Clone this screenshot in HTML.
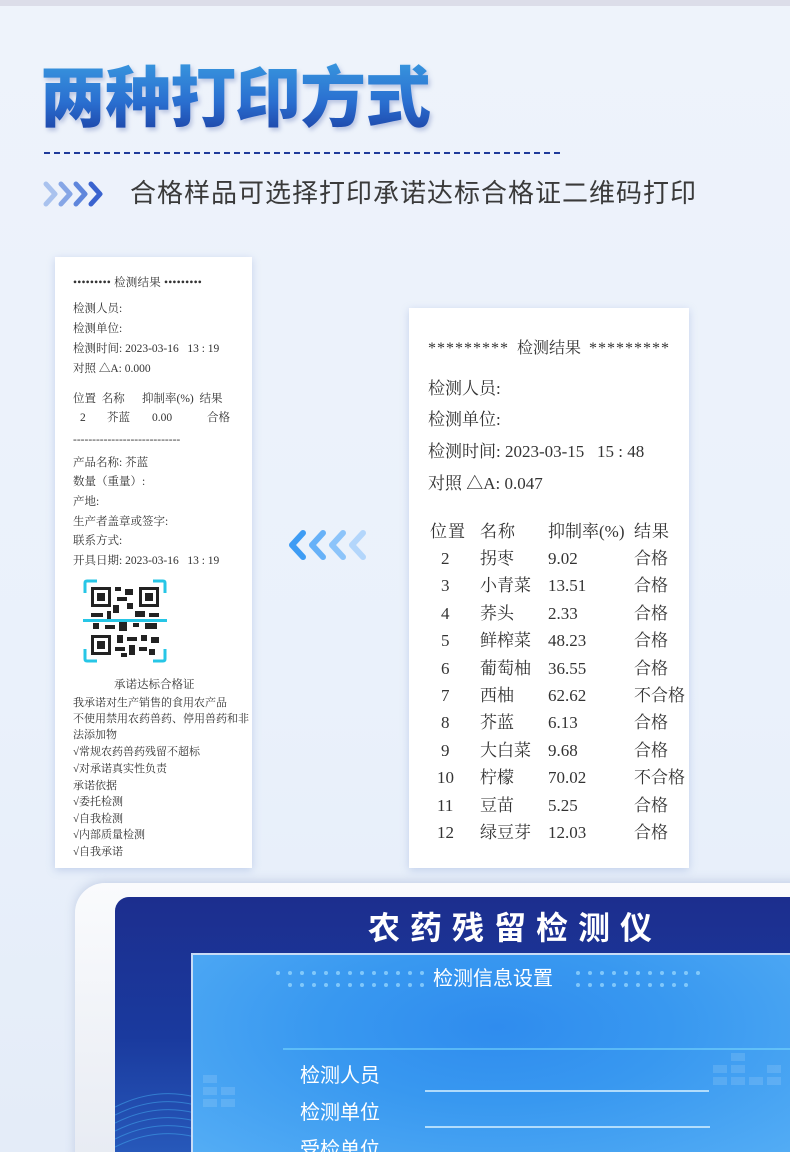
<!DOCTYPE html>
<html><head><meta charset="utf-8">
<style>
*{margin:0;padding:0;box-sizing:border-box}
html,body{width:790px;height:1152px;overflow:hidden}
body{position:relative;background:linear-gradient(180deg,#eef3fb 0%,#eaf1fb 60%,#e4ecf8 100%);font-family:"Liberation Sans","Noto Sans CJK SC",sans-serif}
.a{position:absolute;white-space:nowrap}
.topbar{left:0;top:0;width:790px;height:6px;background:#dcdde9}
.title{left:40px;top:56px;font-size:66px;font-weight:900;letter-spacing:-1px;line-height:84px;
 background:linear-gradient(180deg,#3a9be0 0%,#2a6fd0 55%,#1a3a9e 100%);-webkit-background-clip:text;background-clip:text;color:transparent;filter:drop-shadow(2px 3px 2px rgba(30,60,150,.25))}
.dash{left:44px;top:152px;width:516px;border-top:2px dashed #1f3a9a}
.sub{left:130px;top:176px;font-size:26px;letter-spacing:1px;color:#3a3a3a;line-height:34px}
.rc{background:#fff;box-shadow:0 2px 8px rgba(120,150,210,.35);font-family:"Liberation Serif","Noto Serif CJK SC",serif;color:#333}
.s{font-size:11.5px;line-height:13px}
.t{font-size:11px;line-height:13px}
.b{font-size:17px;line-height:20px}
</style></head><body>
<div class="a topbar"></div>
<div class="a title">两种打印方式</div>
<div class="a dash"></div>
<svg class="a" style="left:43px;top:180px" width="66" height="28" viewBox="0 0 66 28">
<g fill="none" stroke-width="5" stroke-linecap="round" stroke-linejoin="round">
<path d="M3 4 L12 14 L3 24" stroke="#a9c2ee"/>
<path d="M18 4 L27 14 L18 24" stroke="#86a6e6"/>
<path d="M33 4 L42 14 L33 24" stroke="#5f86dc"/>
<path d="M48 4 L57 14 L48 24" stroke="#3a63cf"/>
</g></svg>
<div class="a sub">合格样品可选择打印承诺达标合格证二维码打印</div>

<!-- left receipt -->
<div class="a rc" style="left:55px;top:257px;width:197px;height:611px">
 <div class="a s" style="left:18px;top:20px;letter-spacing:.2px">••••••••• 检测结果 •••••••••</div>
 <div class="a s" style="left:18px;top:46px">检测人员:</div>
 <div class="a s" style="left:18px;top:66px">检测单位:</div>
 <div class="a s" style="left:18px;top:86px">检测时间: 2023-03-16 &nbsp;&nbsp;13 : 19</div>
 <div class="a s" style="left:18px;top:106px">对照 △A: 0.000</div>
 <div class="a s" style="left:18px;top:136px">位置 &nbsp;名称 &nbsp;&nbsp;&nbsp;&nbsp;&nbsp;抑制率(%) &nbsp;结果</div>
 <div class="a s" style="left:25px;top:155px">2</div>
 <div class="a s" style="left:52px;top:155px">芥蓝</div>
 <div class="a s" style="left:97px;top:155px">0.00</div>
 <div class="a s" style="left:152px;top:155px">合格</div>
 <div class="a s" style="left:18px;top:177px">----------------------------</div>
 <div class="a s" style="left:18px;top:200px">产品名称: 芥蓝</div>
 <div class="a s" style="left:18px;top:219px">数量（重量）:</div>
 <div class="a s" style="left:18px;top:239px">产地:</div>
 <div class="a s" style="left:18px;top:259px">生产者盖章或签字:</div>
 <div class="a s" style="left:18px;top:278px">联系方式:</div>
 <div class="a s" style="left:18px;top:298px">开具日期: 2023-03-16 &nbsp;&nbsp;13 : 19</div>
 <svg class="a" style="left:28px;top:322px" width="84" height="84" viewBox="0 0 84 84">
  <g fill="none" stroke="#27c6e6" stroke-width="3">
   <path d="M2 14 V4 Q2 2 4 2 H14"/><path d="M70 2 H80 Q82 2 82 4 V14"/>
   <path d="M2 70 V80 Q2 82 4 82 H14"/><path d="M82 70 V80 Q82 82 80 82 H70"/>
  </g>
  <g fill="#222">
   <rect x="8" y="8" width="20" height="20"/><rect x="56" y="8" width="20" height="20"/><rect x="8" y="56" width="20" height="20"/>
  </g>
  <g fill="#fff"><rect x="11" y="11" width="14" height="14"/><rect x="59" y="11" width="14" height="14"/><rect x="11" y="59" width="14" height="14"/></g>
  <g fill="#222"><rect x="14" y="14" width="8" height="8"/><rect x="62" y="14" width="8" height="8"/><rect x="14" y="62" width="8" height="8"/>
   <rect x="32" y="8" width="6" height="4"/><rect x="42" y="10" width="8" height="6"/><rect x="34" y="18" width="10" height="4"/><rect x="30" y="26" width="6" height="8"/><rect x="44" y="24" width="6" height="6"/>
   <rect x="8" y="34" width="12" height="4"/><rect x="24" y="32" width="4" height="8"/><rect x="52" y="32" width="10" height="6"/><rect x="66" y="34" width="10" height="4"/>
   <rect x="10" y="44" width="6" height="6"/><rect x="22" y="46" width="10" height="4"/><rect x="36" y="42" width="8" height="10"/><rect x="50" y="44" width="6" height="4"/><rect x="62" y="44" width="12" height="6"/>
   <rect x="34" y="56" width="6" height="8"/><rect x="44" y="58" width="10" height="4"/><rect x="58" y="56" width="6" height="6"/><rect x="68" y="58" width="8" height="6"/>
   <rect x="32" y="68" width="10" height="4"/><rect x="46" y="66" width="6" height="10"/><rect x="56" y="68" width="8" height="4"/><rect x="66" y="70" width="6" height="6"/><rect x="38" y="74" width="6" height="4"/></g>
  <rect x="0" y="40" width="84" height="3" fill="#27c6e6"/>
 </svg>
 <div class="a s" style="left:59px;top:422px">承诺达标合格证</div>
 <div class="a t" style="left:18px;top:440px">我承诺对生产销售的食用农产品</div>
 <div class="a t" style="left:18px;top:456px">不使用禁用农药兽药、停用兽药和非</div>
 <div class="a t" style="left:18px;top:472px">法添加物</div>
 <div class="a t" style="left:18px;top:489px">√常规农药兽药残留不超标</div>
 <div class="a t" style="left:18px;top:506px">√对承诺真实性负责</div>
 <div class="a t" style="left:18px;top:523px">承诺依据</div>
 <div class="a t" style="left:18px;top:539px">√委托检测</div>
 <div class="a t" style="left:18px;top:556px">√自我检测</div>
 <div class="a t" style="left:18px;top:572px">√内部质量检测</div>
 <div class="a t" style="left:18px;top:589px">√自我承诺</div>
</div>

<svg class="a" style="left:288px;top:529px" width="80" height="32" viewBox="0 0 80 32">
<g fill="none" stroke-width="6" stroke-linecap="round" stroke-linejoin="round">
<path d="M75 4 L64 16 L75 28" stroke="#b3d6fb"/>
<path d="M55 4 L44 16 L55 28" stroke="#8cc4fa"/>
<path d="M35 4 L24 16 L35 28" stroke="#66b1f8"/>
<path d="M15 4 L4 16 L15 28" stroke="#3d9cf4"/>
</g></svg>

<!-- right receipt -->
<div class="a rc" style="left:409px;top:308px;width:280px;height:560px">
 <div class="a b" style="left:19px;top:31px;font-size:16px"><span style="letter-spacing:1px">*********</span> &nbsp;检测结果 &nbsp;<span style="letter-spacing:1px">*********</span></div>
 <div class="a b" style="left:19px;top:71px">检测人员:</div>
 <div class="a b" style="left:19px;top:102px">检测单位:</div>
 <div class="a b" style="left:19px;top:134px">检测时间: 2023-03-15 &nbsp;&nbsp;15 : 48</div>
 <div class="a b" style="left:19px;top:166px">对照 △A: 0.047</div>
 <div class="a b" style="left:21px;top:214px;letter-spacing:1px">位置</div><div class="a b" style="left:71px;top:214px;letter-spacing:1px">名称</div><div class="a b" style="left:139px;top:214px">抑制率(%)</div><div class="a b" style="left:225px;top:214px;letter-spacing:1px">结果</div>
</div>
<div id="rows"></div>
<script>
var d=[["2","拐枣","9.02","合格"],["3","小青菜","13.51","合格"],["4","荞头","2.33","合格"],["5","鲜榨菜","48.23","合格"],["6","葡萄柚","36.55","合格"],["7","西柚","62.62","不合格"],["8","芥蓝","6.13","合格"],["9","大白菜","9.68","合格"],["10","柠檬","70.02","不合格"],["11","豆苗","5.25","合格"],["12","绿豆芽","12.03","合格"]];
var h="";d.forEach(function(r,i){var y=549+i*27.4;var nx=r[0].length>1?437:441;
h+='<div class="a rc b" style="background:none;box-shadow:none;left:'+nx+'px;top:'+y+'px">'+r[0]+'</div>';
h+='<div class="a rc b" style="background:none;box-shadow:none;left:480px;top:'+y+'px">'+r[1]+'</div>';
h+='<div class="a rc b" style="background:none;box-shadow:none;left:548px;top:'+y+'px">'+r[2]+'</div>';
h+='<div class="a rc b" style="background:none;box-shadow:none;left:634px;top:'+y+'px">'+r[3]+'</div>';});
document.getElementById("rows").innerHTML=h;
</script>

<!-- device -->
<div class="a" style="left:75px;top:883px;width:760px;height:300px;border-radius:30px;background:linear-gradient(180deg,#fafbfd,#e6eaf2);box-shadow:0 -2px 10px rgba(120,140,190,.3)"></div>
<div class="a" style="left:115px;top:897px;width:700px;height:280px;border-radius:14px 0 0 0;background:linear-gradient(180deg,#1c2e8e 0%,#1a3a9e 50%,#2a5fc0 100%);overflow:hidden">
 <svg class="a" style="left:0;top:150px" width="80" height="110" viewBox="0 0 80 110"><g fill="none" stroke="#3fa0e8" stroke-width="1" opacity=".6">
 <path d="M0 60 Q40 40 80 50"/><path d="M0 68 Q40 48 80 58"/><path d="M0 76 Q40 56 80 66"/><path d="M0 84 Q40 64 80 74"/><path d="M0 92 Q40 72 80 82"/><path d="M0 100 Q40 80 80 90"/></g></svg>
</div>
<div class="a" style="left:368px;top:908px;font-size:32px;font-weight:bold;color:#fff;letter-spacing:10px;line-height:40px">农药残留检测仪</div>
<div class="a" style="left:191px;top:953px;width:610px;height:210px;border:2px solid #c8dcf6;border-right:none;background:radial-gradient(ellipse at 50% 35%,#2f8cee 0%,#3898f0 40%,#55aef5 100%);overflow:hidden">
 <svg class="a" style="left:0;top:0" width="610" height="210"><g fill="#fff" opacity=".12">
 <rect x="10" y="120" width="14" height="8"/><rect x="10" y="132" width="14" height="8"/><rect x="10" y="144" width="14" height="8"/><rect x="28" y="132" width="14" height="8"/><rect x="28" y="144" width="14" height="8"/>
 <rect x="520" y="110" width="14" height="8"/><rect x="520" y="122" width="14" height="8"/><rect x="538" y="98" width="14" height="8"/><rect x="538" y="110" width="14" height="8"/><rect x="538" y="122" width="14" height="8"/><rect x="556" y="122" width="14" height="8"/><rect x="574" y="110" width="14" height="8"/><rect x="574" y="122" width="14" height="8"/>
 </g>
 <line x1="90" y1="94" x2="610" y2="94" stroke="#7fe0ff" stroke-width="2" opacity=".5"/>
 <g fill="#9fdcff" opacity=".7"><circle cx="85" cy="18" r="2"/><circle cx="97" cy="18" r="2"/><circle cx="109" cy="18" r="2"/><circle cx="121" cy="18" r="2"/><circle cx="133" cy="18" r="2"/><circle cx="145" cy="18" r="2"/><circle cx="157" cy="18" r="2"/><circle cx="169" cy="18" r="2"/><circle cx="181" cy="18" r="2"/><circle cx="193" cy="18" r="2"/><circle cx="205" cy="18" r="2"/><circle cx="217" cy="18" r="2"/><circle cx="229" cy="18" r="2"/>
 <circle cx="97" cy="30" r="2"/><circle cx="109" cy="30" r="2"/><circle cx="121" cy="30" r="2"/><circle cx="133" cy="30" r="2"/><circle cx="145" cy="30" r="2"/><circle cx="157" cy="30" r="2"/><circle cx="169" cy="30" r="2"/><circle cx="181" cy="30" r="2"/><circle cx="193" cy="30" r="2"/><circle cx="205" cy="30" r="2"/><circle cx="217" cy="30" r="2"/><circle cx="229" cy="30" r="2"/>
 <circle cx="385" cy="18" r="2"/><circle cx="397" cy="18" r="2"/><circle cx="409" cy="18" r="2"/><circle cx="421" cy="18" r="2"/><circle cx="433" cy="18" r="2"/><circle cx="445" cy="18" r="2"/><circle cx="457" cy="18" r="2"/><circle cx="469" cy="18" r="2"/><circle cx="481" cy="18" r="2"/><circle cx="493" cy="18" r="2"/><circle cx="505" cy="18" r="2"/>
 <circle cx="385" cy="30" r="2"/><circle cx="397" cy="30" r="2"/><circle cx="409" cy="30" r="2"/><circle cx="421" cy="30" r="2"/><circle cx="433" cy="30" r="2"/><circle cx="445" cy="30" r="2"/><circle cx="457" cy="30" r="2"/><circle cx="469" cy="30" r="2"/><circle cx="481" cy="30" r="2"/><circle cx="493" cy="30" r="2"/></g>
 <g stroke="#d8f2ff" stroke-width="1.5"><line x1="232" y1="136" x2="516" y2="136"/><line x1="232" y1="172" x2="517" y2="172"/></g>
 </svg>
 <div class="a" style="left:240px;top:10px;font-size:20px;color:#fff;line-height:28px">检测信息设置</div>
 <div class="a" style="left:107px;top:107px;font-size:20px;color:#fff;line-height:28px">检测人员</div>
 <div class="a" style="left:107px;top:144px;font-size:20px;color:#fff;line-height:28px">检测单位</div>
 <div class="a" style="left:107px;top:181px;font-size:20px;color:#fff;line-height:28px">受检单位</div>
</div>
</body></html>
